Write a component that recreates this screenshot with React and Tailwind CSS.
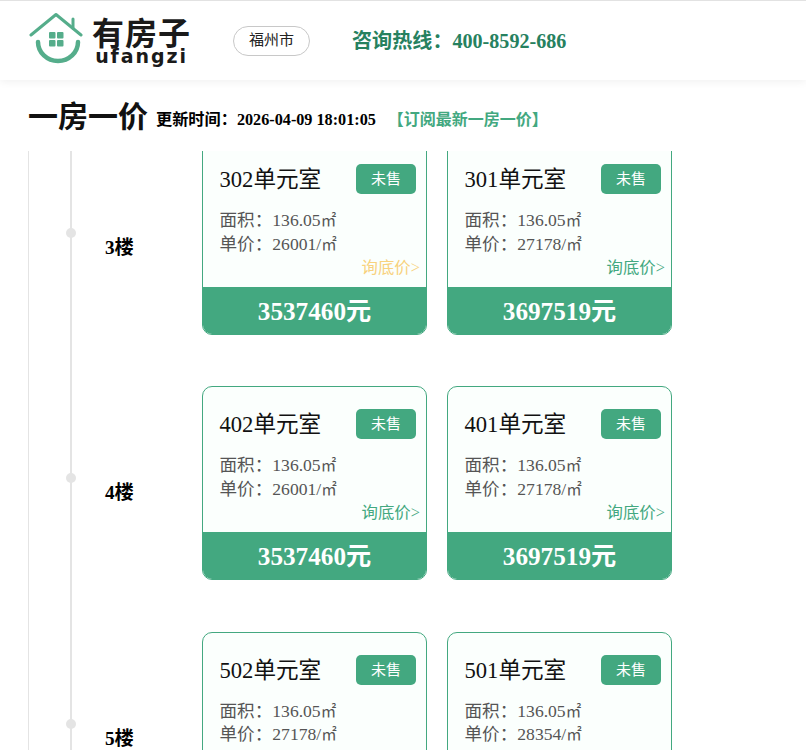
import React from "react";

const serif = "font-['Liberation_Serif','Noto_Sans_CJK_SC',serif]";

const floors = [
  {
    name: "3楼",
    units: [
      { room: "302", price: "26001", total: "3537460", link: "text-[#f8d27e]" },
      { room: "301", price: "27178", total: "3697519", link: "text-[#43a880]" },
    ],
  },
  {
    name: "4楼",
    units: [
      { room: "402", price: "26001", total: "3537460", link: "text-[#43a880]" },
      { room: "401", price: "27178", total: "3697519", link: "text-[#43a880]" },
    ],
  },
  {
    name: "5楼",
    units: [
      { room: "502", price: "27178", total: "3697519", link: "text-[#43a880]" },
      { room: "501", price: "28354", total: "3857578", link: "text-[#43a880]" },
    ],
  },
];

const Logo = () => (
  <svg width="56" height="56" viewBox="0 0 56 56" fill="none" className="shrink-0">
    <path d="M2 22 L27 1.5 L52 22" stroke="#55ad8b" strokeWidth="3" strokeLinecap="round" strokeLinejoin="round" />
    <path d="M44 6 L44 15" stroke="#55ad8b" strokeWidth="3" strokeLinecap="round" />
    <path d="M9 29 A 20 19 0 0 0 49 29" stroke="#55ad8b" strokeWidth="4.5" strokeLinecap="round" />
    <rect x="20" y="19" width="6.5" height="6.5" rx="1" fill="#55ad8b" />
    <rect x="28" y="19" width="6.5" height="6.5" rx="1" fill="#55ad8b" />
    <rect x="20" y="27" width="6.5" height="6.5" rx="1" fill="#55ad8b" />
    <rect x="28" y="27" width="6.5" height="6.5" rx="1" fill="#55ad8b" />
  </svg>
);

const UnitCard = ({ unit }) => (
  <div className="w-[225px] h-[194px] border border-[#43a880] rounded-[10px] overflow-hidden bg-[#fbfffd] flex flex-col">
    <div className="flex-1 pl-[16.5px] pr-[10px]">
      <div className="flex items-center justify-between pt-[21px]">
        <span className="mt-[2px] text-[22.6px] leading-[30px] text-[#111]">{unit.room}单元室</span>
        <span className="w-[60px] h-[30px] rounded-[5px] bg-[#43a880] text-[#fff] text-[15px] flex items-center justify-center">未售</span>
      </div>
      <div className="mt-[14px] text-[17.6px] leading-[23.5px] text-[#555]">
        <div>面积：136.05<span className="text-[15.5px]">㎡</span></div>
        <div>单价：{unit.price}/<span className="text-[15.5px]">㎡</span></div>
      </div>
      <div className="-mr-[4px] text-right">
        <span className={`text-[16.4px] leading-[20px] ${unit.link}`}>询底价&gt;</span>
      </div>
    </div>
    <div className="h-[47px] pt-[2px] bg-[#43a880] text-white text-[25.2px] font-bold flex items-center justify-center">{unit.total}元</div>
  </div>
);

const FloorRow = ({ floor }) => (
  <div className="h-[245.4px] flex">
    <div className="w-[41px]" />
    <div className="w-[2px] bg-[#e4e4e4] relative">
      <div className="absolute left-[-4px] top-[87px] w-[10px] h-[10px] rounded-full bg-[#e4e4e4]" />
    </div>
    <div className="w-[33px] shrink-0" />
    <div className="w-[97px] shrink-0 pt-[93px] text-[19.2px] leading-[28px] font-bold text-black">{floor.name}</div>
    <div className="flex gap-[20px] items-start">
      {floor.units.map((unit) => (
        <UnitCard key={unit.room} unit={unit} />
      ))}
    </div>
  </div>
);

export default function App() {
  return (
    <div className={`w-[806px] h-[750px] overflow-hidden bg-white ${serif}`}>
      <header className="h-[80px] border-t border-[#e2e2e2] bg-white shadow-[0_2px_8px_rgba(0,0,0,0.06)] flex items-center relative">
        <div className="ml-[29px] flex items-center">
          <Logo />
          <div className="ml-[7px] mb-[2px] font-['Noto_Sans_CJK_SC',sans-serif] text-[#1a1a1a]">
            <div className="text-[32px] leading-[34px] font-bold tracking-[1px]">有房子</div>
            <div className="font-['DejaVu_Sans',sans-serif] text-[19px] leading-[17px] font-bold tracking-[1.9px] text-center">ufangzi</div>
          </div>
        </div>
        <div className="ml-[42px] w-[77px] h-[30px] rounded-full border border-[#c8c8c8] text-[15px] text-[#222] flex items-center justify-center">福州市</div>
        <div className="ml-[42px] mt-[2px] text-[20.1px] font-bold text-[#26815f]">咨询热线：400-8592-686</div>
      </header>
      <div className="h-[71px] pl-[28px] pt-[1px] flex items-center">
        <span className="text-[30px] font-bold text-[#111]">一房一价</span>
        <span className="ml-[8px] mt-[8px] text-[16.2px] font-bold text-black">更新时间：2026-04-09 18:01:05</span>
        <span className="ml-[12px] mt-[8px] text-[16px] font-bold text-[#43a880]">【订阅最新一房一价】</span>
      </div>
      <div className="h-[599px] overflow-hidden">
        <div className="ml-[28px] w-px h-full bg-[#e4e4e4] float-left" />
        <div className="-mt-[10px]">
          {floors.map((floor) => (
            <div key={floor.name} className="-ml-px">
              <FloorRow floor={floor} />
            </div>
          ))}
        </div>
      </div>
    </div>
  );
}
